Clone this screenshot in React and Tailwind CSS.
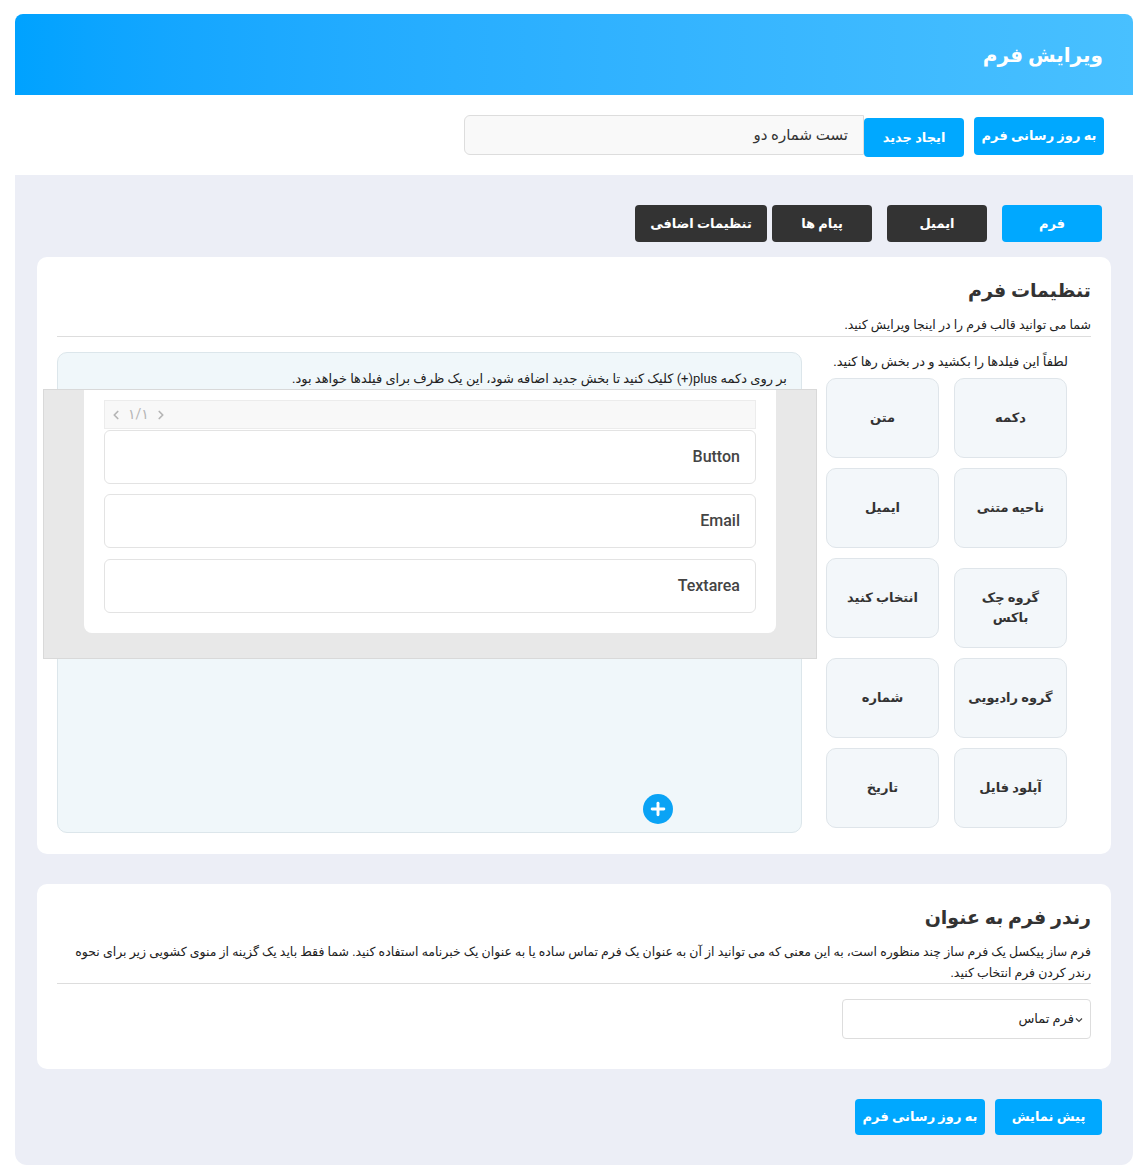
import React from "react";
import { ChevronLeft, ChevronRight, Plus } from "lucide-react";

const font = "font-['Roboto','DejaVu_Sans',sans-serif]";

function BlueBtn({ children, className = "" }) {
  return (
    <button
      className={`bg-[#00a8ff] text-white font-bold text-[13px] rounded-[4px] flex items-center justify-center ${className}`}
    >
      {children}
    </button>
  );
}

function FieldCard({ children, className = "" }) {
  return (
    <div
      className={`h-[80px] w-[113px] bg-[#f3f7fa] border border-[#dfe5ea] rounded-[10px] flex items-center justify-center text-center text-[13px] font-bold text-[#333] leading-[20px] px-2 ${className}`}
    >
      {children}
    </div>
  );
}

function FieldRow({ label, className = "" }) {
  return (
    <div
      className={`h-[54px] bg-white border border-[#e3e3e3] rounded-[6px] flex items-center pr-[15px] text-[16px] text-[#444] font-['Roboto',sans-serif] font-medium ${className}`}
    >
      {label}
    </div>
  );
}

export default function App() {
  return (
    <div dir="rtl" className={`${font} bg-white min-h-[1172px] w-[1146px] pt-[14px] pl-[15px] pr-[13px] text-[#222]`}>
      {/* Header */}
      <div className="h-[81px] rounded-t-[8px] bg-gradient-to-l from-[#48c0ff] to-[#00a2ff] flex items-center pr-[30px]">
        <h1 className="text-white text-[20px] font-bold">ویرایش فرم</h1>
      </div>

      {/* Toolbar */}
      <div className="mt-[20px] h-[40px] flex items-start pr-[29px]">
        <BlueBtn className="w-[130px] h-[38px] mt-[2px]">به روز رسانی فرم</BlueBtn>
        <BlueBtn className="w-[100px] h-[39px] mt-[3px] mr-[10px]">ایجاد جدید</BlueBtn>
        <div className="w-[400px] h-[40px] bg-[#f9f9f9] border border-[#dddddd] rounded-l-[6px] flex items-center pr-[15px] text-[15px] text-[#333]">
          تست شماره دو
        </div>
      </div>

      {/* Gray area */}
      <div className="mt-[20px] bg-[#eceef6] rounded-b-[12px] pt-[30px] pb-[30px] px-[22px]">
        {/* Tabs */}
        <div className="flex pr-[9px] h-[37px]">
          <button className="w-[100px] h-[37px] rounded-[4px] bg-[#00a8ff] text-white font-bold text-[13px]">فرم</button>
          <button className="w-[100px] h-[37px] rounded-[4px] bg-[#333333] text-white font-bold text-[13px] mr-[15px]">ایمیل</button>
          <button className="w-[100px] h-[37px] rounded-[4px] bg-[#333333] text-white font-bold text-[13px] mr-[15px]">پیام ها</button>
          <button className="w-[132px] h-[37px] rounded-[4px] bg-[#333333] text-white font-bold text-[13px] mr-[5px]">تنظیمات اضافی</button>
        </div>

        {/* Card 1 */}
        <div className="mt-[15px] bg-white rounded-[10px] px-[20px] pt-[19px] pb-[21px]">
          <h2 className="text-[19px] font-bold text-[#333] leading-[30px]">تنظیمات فرم</h2>
          <p className="text-[12.5px] mt-[9px] leading-[20px] text-[#222]">شما می توانید قالب فرم را در اینجا ویرایش کنید.</p>
          <div className="mt-[1px] border-t border-[#dddddd]"></div>

          <div className="mt-[15px] flex">
            {/* Right column */}
            <div className="w-[265px] pr-[24px] shrink-0">
              <p className="text-[13px] leading-[20px] mb-[6px] -mr-[1px]">لطفاً این فیلدها را بکشید و در بخش رها کنید.</p>
              <div className="grid grid-cols-[113px_113px] gap-x-[15px] gap-y-[10px] items-start">
                <FieldCard>دکمه</FieldCard>
                <FieldCard>متن</FieldCard>
                <FieldCard>ناحیه متنی</FieldCard>
                <FieldCard>ایمیل</FieldCard>
                <FieldCard className="mt-[10px]">گروه چک<br />باکس</FieldCard>
                <FieldCard>انتخاب کنید</FieldCard>
                <FieldCard>گروه رادیویی</FieldCard>
                <FieldCard>شماره</FieldCard>
                <FieldCard>آپلود فایل</FieldCard>
                <FieldCard>تاریخ</FieldCard>
              </div>
            </div>

            {/* Drop area */}
            <div className="mr-[24px] flex-1 h-[481px] bg-[#f0f7fa] border border-[#dce6eb] rounded-[10px] flex flex-col">
              <p className="text-[13px] leading-[20px] pr-[14px] mt-[16px]">
                بر روی دکمه plus(+) کلیک کنید تا بخش جدید اضافه شود، این یک ظرف برای فیلدها خواهد بود.
              </p>
              <div className="mt-[0px] -mr-[16px] -ml-[15px] h-[270px] bg-[#e8e8e8] border border-[#d9d9d9] px-[40px]">
                <div className="bg-white rounded-b-[8px] px-[20px] pt-[10px] pb-[20px]">
                  <div dir="ltr" className="h-[29px] bg-[#f8f8f8] border border-[#ececec] flex items-center pl-[4px] gap-[5px] text-[#b5b5b5] text-[14px]">
                    <ChevronLeft size={14} strokeWidth={3} />
                    <span>۱/۱</span>
                    <ChevronRight size={14} strokeWidth={3} />
                  </div>
                  <FieldRow label="Button" className="mt-[1px]" />
                  <FieldRow label="Email" className="mt-[10px] h-[53px]" />
                  <FieldRow label="Textarea" className="mt-[11px] h-[53px]" />
                </div>
              </div>
              <div className="mt-auto pb-[8px] pr-[128px] flex">
                <div className="w-[30px] h-[30px] rounded-full bg-[#0aa3f5] flex items-center justify-center">
                  <Plus size={20} strokeWidth={3.5} color="white" />
                </div>
              </div>
            </div>
          </div>
        </div>

        {/* Card 2 */}
        <div className="mt-[30px] bg-white rounded-[10px] px-[20px] pt-[19px] pb-[30px]">
          <h2 className="text-[19px] font-bold text-[#333] leading-[30px]">رندر فرم به عنوان</h2>
          <p className="text-[12.5px] mt-[8px] leading-[21px] text-[#222]">
            فرم ساز پیکسل یک فرم ساز چند منظوره است، به این معنی که می توانید از آن به عنوان یک فرم تماس ساده یا به عنوان یک خبرنامه استفاده کنید. شما فقط باید یک گزینه از منوی کشویی زیر برای نحوه رندر کردن فرم انتخاب کنید.
          </p>
          <div className="mt-[0px] border-t border-[#dddddd]"></div>
          <div className="mt-[15px] w-[249px] h-[40px] border border-[#dddddd] rounded-[4px] flex items-center pr-[7px] text-[13px] text-[#222]">
            <svg width="8" height="6" viewBox="0 0 8 6" className="ml-[1px] mt-[2px]">
              <path d="M1 1.5 L4 4.5 L7 1.5" fill="none" stroke="#444" strokeWidth="1.2" />
            </svg>
            <span>فرم تماس</span>
          </div>
        </div>

        {/* Bottom buttons */}
        <div className="mt-[30px] flex pr-[9px]">
          <BlueBtn className="w-[107px] h-[36px]">پیش نمایش</BlueBtn>
          <BlueBtn className="w-[130px] h-[36px] mr-[10px]">به روز رسانی فرم</BlueBtn>
        </div>
      </div>
    </div>
  );
}
